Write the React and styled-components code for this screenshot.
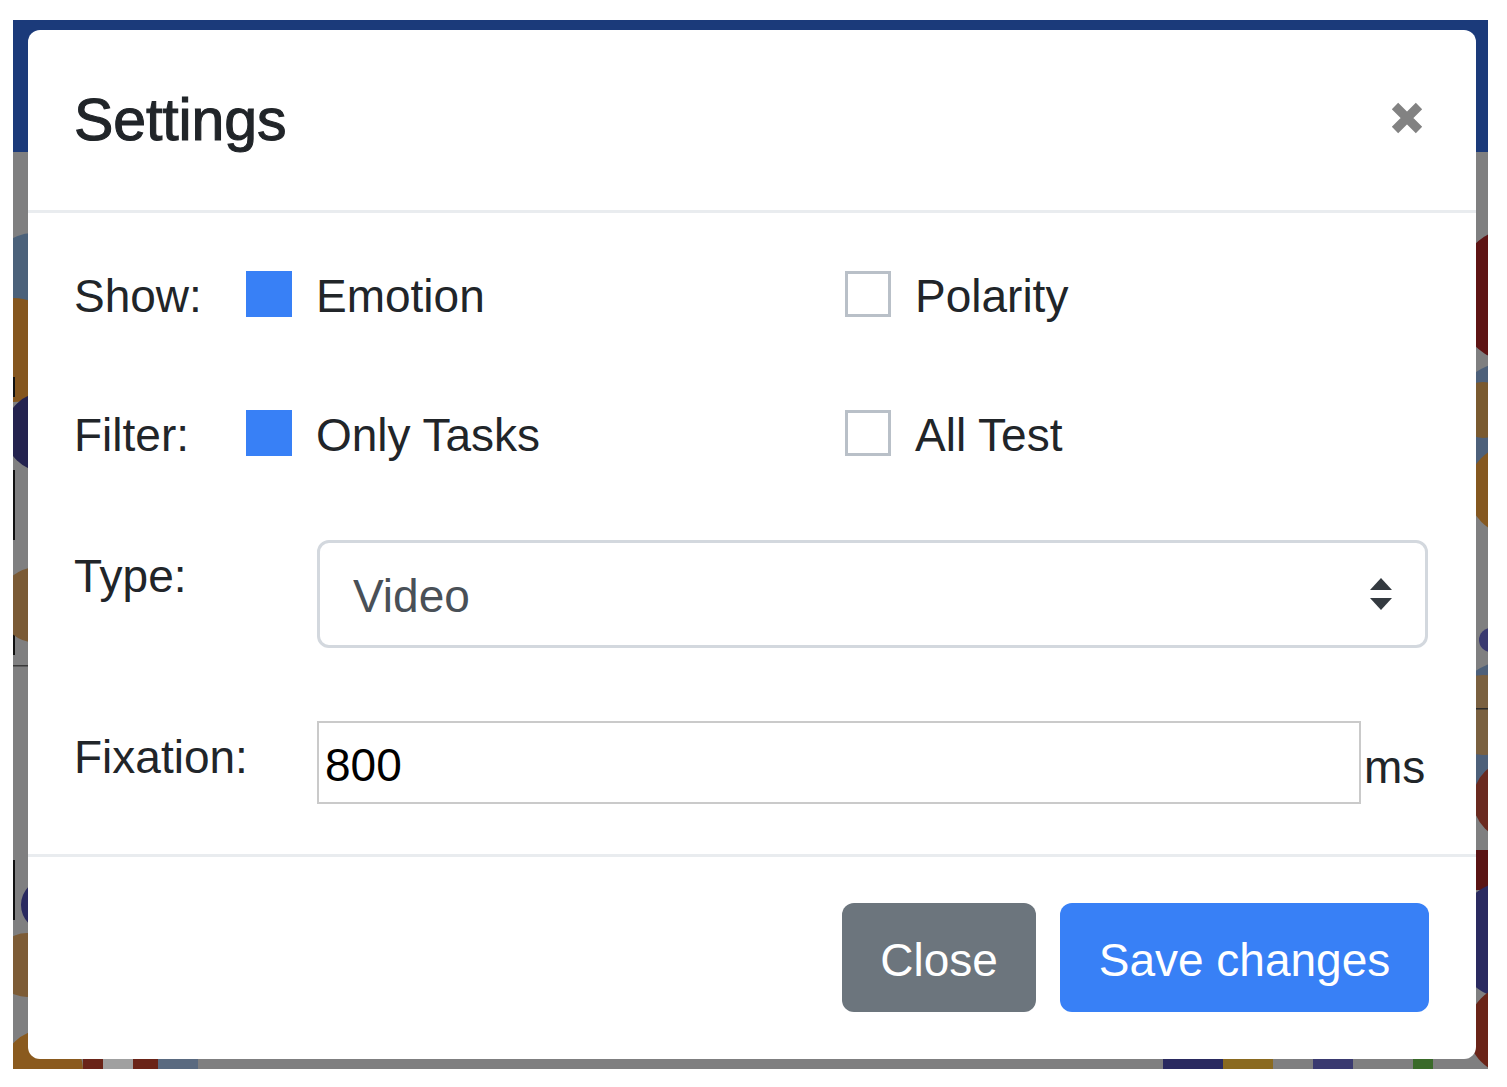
import React from "react";
import styled, { createGlobalStyle } from "styled-components";

const GlobalStyle = createGlobalStyle`
  html, body { margin: 0; padding: 0; background: #ffffff; }
  body { font-family: "Liberation Sans", Arial, sans-serif; color: #212529; }
  * { box-sizing: border-box; }
`;

const Stage = styled.div`
  position: relative;
  margin: 20px 0 0 13px;
  width: 1475px;
  height: 1049px;
  overflow: hidden;
  background: #7f7f80;
`;

const Art = styled.svg`
  position: absolute;
  inset: 0;
  display: block;
`;

const Modal = styled.div`
  position: absolute;
  left: 15px;
  top: 10px;
  width: 1448px;
  height: 1029px;
  background: #ffffff;
  border-radius: 12px;
  display: flex;
  flex-direction: column;
  overflow: hidden;
`;

const Header = styled.div`
  height: 183px;
  flex: none;
  display: flex;
  align-items: center;
  justify-content: space-between;
  padding: 0 52px 0 46px;
  border-bottom: 3px solid #e9ecef;
`;

const Title = styled.h5`
  margin: 0;
  font-size: 59px;
  font-weight: 400;
  line-height: 1.2;
  color: #212529;
  -webkit-text-stroke: 1.1px #212529;
  letter-spacing: -0.1px;
`;

const CloseX = styled.button`
  width: 34px;
  height: 34px;
  padding: 0;
  border: none;
  background: transparent;
  display: flex;
  margin-top: -4px;
  cursor: pointer;
`;

const Body = styled.div`
  flex: 1;
  display: flex;
  flex-direction: column;
  padding: 58px 48px 0 46px;
`;

const CheckRow = styled.div`
  display: flex;
  align-items: center;
  height: 46px;
  margin-bottom: ${(p) => p.$gap}px;
`;

const FieldRow = styled.div`
  display: flex;
  align-items: flex-start;
  height: ${(p) => p.$h}px;
  margin-bottom: ${(p) => p.$gap || 0}px;
`;

const Label = styled.div`
  flex: none;
  width: ${(p) => p.$w}px;
  font-size: 46px;
  line-height: ${(p) => (p.$lh ? p.$lh + "px" : "1")};
  padding-top: ${(p) => (p.$lh ? 2 : 4)}px;
  color: #212529;
`;

const Option = styled.label`
  flex: none;
  width: ${(p) => (p.$w ? p.$w + "px" : "auto")};
  display: flex;
  align-items: center;
  gap: 24px;
  font-size: 46px;
  line-height: 1;
  color: #212529;
`;

const OptionText = styled.span`
  padding-top: 4px;
`;

const Box = styled.span`
  width: 46px;
  height: 46px;
  flex: none;
  background: ${(p) => (p.$on ? "#3880f6" : "#ffffff")};
  border: ${(p) => (p.$on ? "none" : "3px solid #b9c0c8")};
`;

const SelectWrap = styled.div`
  position: relative;
  flex: 1;
  height: 108px;
`;

const Select = styled.select`
  appearance: none;
  -webkit-appearance: none;
  width: 100%;
  height: 100%;
  border: 3px solid #d3d8de;
  border-radius: 12px;
  background: #ffffff;
  padding: 4px 0 0 33px;
  font-family: "Liberation Sans", Arial, sans-serif;
  font-size: 46px;
  color: #495057;
  outline: none;
`;

const Arrows = styled.svg`
  position: absolute;
  right: 36px;
  top: 38px;
  pointer-events: none;
`;

const Input = styled.input`
  flex: none;
  width: 1044px;
  height: 83px;
  border: 2px solid #cacaca;
  border-radius: 0;
  padding: 4px 0 0 6px;
  font-family: "Liberation Sans", Arial, sans-serif;
  font-size: 46px;
  color: #000000;
  background: #ffffff;
  outline: none;
`;

const Unit = styled.span`
  align-self: center;
  margin-left: 3px;
  margin-top: 8px;
  font-size: 46px;
  line-height: 1;
  color: #212529;
`;

const Footer = styled.div`
  flex: none;
  display: flex;
  justify-content: flex-end;
  align-items: flex-start;
  gap: 24px;
  padding: 46px 47px 47px 48px;
  border-top: 3px solid #e9ecef;
`;

const Button = styled.button`
  height: 109px;
  width: ${(p) => p.$w}px;
  border: none;
  border-radius: 12px;
  background: ${(p) => p.$bg};
  color: #ffffff;
  font-family: "Liberation Sans", Arial, sans-serif;
  font-size: 46px;
  line-height: 1;
  padding: 4px 0 0;
  cursor: pointer;
`;

function BackdropArt() {
  return (
    <Art width="1475" height="1049" viewBox="0 0 1475 1049">
      <rect x="0" y="0" width="1475" height="1049" fill="#7f7f80" />
      {/* left strip */}
      <circle cx="20" cy="255" r="42" fill="#4b617a" />
      <circle cx="0" cy="330" r="52" fill="#85561e" />
      <circle cx="32" cy="412" r="40" fill="#24234f" />
      <rect x="0" y="357" width="2" height="20" fill="#111" />
      <rect x="0" y="450" width="2" height="70" fill="#111" />
      <rect x="0" y="590" width="2" height="45" fill="#111" />
      <circle cx="24" cy="585" r="38" fill="#7a5a35" />
      <rect x="0" y="645" width="15" height="1.5" fill="#3a3a3a" />
      <rect x="0" y="840" width="2" height="60" fill="#111" />
      <circle cx="34" cy="885" r="26" fill="#2a2a60" />
      <circle cx="14" cy="945" r="32" fill="#7d5c36" />
      <circle cx="30" cy="1050" r="40" fill="#8a5a1e" />
      {/* right strip */}
      <circle cx="1510" cy="275" r="70" fill="#5e1414" />
      <circle cx="1505" cy="420" r="80" fill="#4d607a" />
      <circle cx="1470" cy="390" r="28" fill="#7a5a30" />
      <circle cx="1500" cy="470" r="45" fill="#855820" />
      <circle cx="1478" cy="620" r="12" fill="#3a3a70" />
      <circle cx="1500" cy="710" r="70" fill="#4d607a" />
      <circle cx="1470" cy="695" r="40" fill="#7a6040" />
      <circle cx="1500" cy="780" r="40" fill="#6a2a20" />
      <rect x="1463" y="688" width="12" height="1.5" fill="#2a2a2a" />
      <rect x="1463" y="830" width="12" height="40" fill="#5a1414" />
      <circle cx="1500" cy="920" r="60" fill="#2a2a60" />
      <circle cx="1500" cy="1010" r="45" fill="#6a2418" />
      {/* bottom strip */}
      <rect x="70" y="1039" width="20" height="10" fill="#6a2418" />
      <rect x="90" y="1039" width="30" height="10" fill="#a0a0a0" />
      <rect x="120" y="1039" width="25" height="10" fill="#6a2418" />
      <rect x="145" y="1039" width="40" height="10" fill="#5a6a80" />
      <rect x="1150" y="1039" width="60" height="10" fill="#2a2a60" />
      <rect x="1210" y="1039" width="50" height="10" fill="#8a6a20" />
      <rect x="1300" y="1039" width="40" height="10" fill="#3a3a70" />
      <rect x="1400" y="1039" width="20" height="10" fill="#3a6a2a" />
      {/* navbar */}
      <rect x="0" y="0" width="1475" height="132" fill="#1b3a7a" />
    </Art>
  );
}

export default function App() {
  return (
    <>
      <GlobalStyle />
      <Stage>
        <BackdropArt />
        <Modal role="dialog" aria-label="Settings">
          <Header>
            <Title>Settings</Title>
            <CloseX aria-label="Close">
              <svg width="34" height="34" viewBox="0 0 34 34">
                <path
                  d="M5 5 L29 29 M29 5 L5 29"
                  stroke="#828282"
                  strokeWidth="9"
                  strokeLinecap="butt"
                />
              </svg>
            </CloseX>
          </Header>
          <Body>
            <CheckRow $gap={93}>
              <Label $w={172}>Show:</Label>
              <Option $w={599}>
                <Box $on />
                <OptionText>Emotion</OptionText>
              </Option>
              <Option>
                <Box />
                <OptionText>Polarity</OptionText>
              </Option>
            </CheckRow>
            <CheckRow $gap={84}>
              <Label $w={172}>Filter:</Label>
              <Option $w={599}>
                <Box $on />
                <OptionText>Only Tasks</OptionText>
              </Option>
              <Option>
                <Box />
                <OptionText>All Test</OptionText>
              </Option>
            </CheckRow>
            <FieldRow $h={108} $gap={73}>
              <Label $w={243} $lh={69}>Type:</Label>
              <SelectWrap>
                <Select defaultValue="Video">
                  <option>Video</option>
                  <option>Image</option>
                </Select>
                <Arrows width="22" height="32" viewBox="0 0 22 32">
                  <path d="M11 0 L22 12 L0 12 Z" fill="#343a40" />
                  <path d="M0 20 L22 20 L11 32 Z" fill="#343a40" />
                </Arrows>
              </SelectWrap>
            </FieldRow>
            <FieldRow $h={83}>
              <Label $w={243} $lh={69}>Fixation:</Label>
              <Input defaultValue="800" />
              <Unit>ms</Unit>
            </FieldRow>
          </Body>
          <Footer>
            <Button $w={194} $bg="#6c757d">Close</Button>
            <Button $w={369} $bg="#3880f6">Save changes</Button>
          </Footer>
        </Modal>
      </Stage>
    </>
  );
}
